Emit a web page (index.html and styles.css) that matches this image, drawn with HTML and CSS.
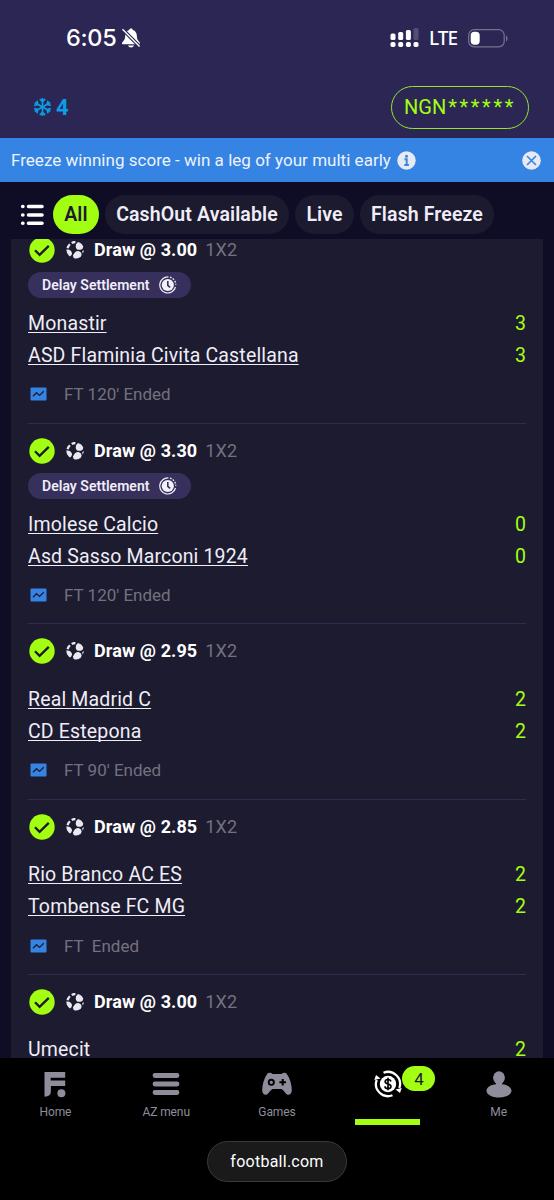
FILE: index.html
```html
<!DOCTYPE html>
<html lang="en">
<head>
<meta charset="utf-8">
<title>Open bets</title>
<link rel="stylesheet" href="styles.css">
</head>
<body>
<svg class="defs" aria-hidden="true">
  <symbol id="check" viewBox="0 0 26 26"><circle cx="13" cy="13" r="12.7" fill="#a3ff12"/><path d="M6 13.2l4.6 4.7 9.2-9" fill="none" stroke="#1d1b2f" stroke-width="2.3"/></symbol>
  <symbol id="ball" viewBox="0 0 18 18"><g fill="#e9e7f2"><path d="M10 3.200L12 .9q4.200 1 5.300 4.900-.2 2.600-2.700 2.900-3 .3-4-.8-1.500-1.600-.6-4.700z"/><path d="M9 11.200q2-1.600 4.200-1 2.600 1 2.400 3.600l-.8 2q-3 2.500-6.600 1.500-1.400-1.200-1.200-3z"/><path d="M.3 8.600q2.600-.4 4.200 1 1.700 1.600 1.500 3-.4 2.300-2.200 2.900Q.5 13 .3 8.600z"/><path d="M16.200 10.200l1.600-1.200q-.1 2-1.100 3.500z"/></g><path d="M1.600 7.200Q2.200 4.900 3.900 3.200M5.700 2Q7.400.9 9.400 1" fill="none" stroke="#e9e7f2" stroke-width="2.300"/></symbol>
  <symbol id="clock" viewBox="0 0 18 18"><circle cx="8.800" cy="9" r="6.100" fill="#f2f0fa"/><path d="M9.500 1A8 8 0 1 0 16.500 11" fill="none" stroke="#f2f0fa" stroke-width="1.200"/><path d="M11 1.200a8 8 0 0 1 5.800 7.500" fill="none" stroke="#f2f0fa" stroke-width="1.300" stroke-dasharray="1.700 1.300"/><path d="M8.800 5v4.300l2.300 2" fill="none" stroke="#37305c" stroke-width="1.600"/></symbol>
  <symbol id="chart" viewBox="0 0 17 14"><rect x=".5" y=".5" width="16" height="13" rx="1" fill="#3584e4"/><path d="M3 9.300l3.500-3.600 3 2.700 4.300-4.200" fill="none" stroke="#1d1b2f" stroke-width="1.300"/></symbol>
</svg>

<header class="top">
  <div class="status">
    <div class="time">6:05
      <svg width="20" height="20" viewBox="0 0 20 20"><path d="M10 .5c-1 0-1.600.6-1.800 1.400C5.500 2.700 4.200 5 4.200 7.600c0 3.700-1 4.800-2.800 6.600-.8.9-.5 2.100.8 2.100h15.400c1.300 0 1.700-1.200.9-2.100-1.700-1.800-2.700-2.900-2.700-6.600 0-2.600-1.300-4.900-4-5.700C11.600 1.100 11 .5 10 .5zM7 17.500h6c-.4 1.300-1.500 2-3 2s-2.600-.7-3-2z" fill="#fff"/><path d="M1.500 1.300L18.600 18.500" stroke="#2b2653" stroke-width="3.600"/><path d="M1.500 1.300L18.600 18.500" stroke="#fff" stroke-width="1.400"/></svg>
    </div>
    <div class="signals">
      <svg width="29" height="20" viewBox="0 0 29 20"><g fill="#fff"><rect x=".5" y="5.500" width="5" height="6.500" rx="1.600"/><rect x="8.200" y="4" width="5" height="8" rx="1.600"/><rect x="15.900" y="2" width="5" height="10" rx="1.600"/><rect x=".5" y="14" width="5" height="5" rx="1.800"/><rect x="8.200" y="14" width="5" height="5" rx="1.800"/><rect x="15.900" y="14" width="5" height="5" rx="1.800"/><rect x="23.500" y="14" width="5" height="5" rx="1.800"/></g><rect x="23.500" y="0" width="5" height="12" rx="1.600" fill="#534e75"/></svg>
      <span class="lte">LTE</span>
      <svg width="40" height="19" viewBox="0 0 40 19"><rect x=".7" y=".7" width="35.500" height="17.200" rx="5.500" fill="none" stroke="#77738f" stroke-width="1.200"/><rect x="2.700" y="2.700" width="9" height="13" rx="3.700" fill="#fff"/><path d="M38 6.500q1.500.7 1.500 3t-1.500 3z" fill="#77738f"/></svg>
    </div>
  </div>
  <div class="account">
    <div class="freezes">
      <svg width="17" height="18" viewBox="-8.500 -9 17 18" fill="none" stroke="#0d9de8" stroke-width="1.700"><g id="arm"><path d="M0 0V-9M-2.700-8L0-5.300 2.700-8"/></g><use href="#arm" transform="rotate(60)"/><use href="#arm" transform="rotate(120)"/><use href="#arm" transform="rotate(180)"/><use href="#arm" transform="rotate(240)"/><use href="#arm" transform="rotate(300)"/></svg>
      <span>4</span>
    </div>
    <div class="balance"><span>NGN</span><span class="stars">******</span></div>
  </div>
</header>

<div class="banner">
  <span>Freeze winning score - win a leg of your multi early</span>
  <svg width="19" height="19" viewBox="0 0 19 19"><circle cx="9.500" cy="9.500" r="9.200" fill="#e8eaf3"/><circle cx="9.500" cy="5.200" r="1.500" fill="#3584e4"/><path d="M7.500 8.300h2.200v5.500M7.300 14h4.600" fill="none" stroke="#3584e4" stroke-width="1.900"/></svg>
  <svg class="close" width="19" height="19" viewBox="0 0 19 19"><circle cx="9.500" cy="9.500" r="9.300" fill="#e8eaf3"/><path d="M5 5l9 9M14 5l-9 9" stroke="#3584e4" stroke-width="1.600"/></svg>
</div>

<div class="filters">
  <svg width="24" height="22" viewBox="0 0 24 22" stroke="#fff" stroke-width="3.600" stroke-linecap="round"><path d="M2.700 2.500h.2M2.700 11h.2M2.700 19.300h.2M8.500 2.500h13.500M8.500 11h13.500M8.500 19.300h13.500"/></svg>
  <span class="chip all">All</span>
  <span class="chip cashout">CashOut Available</span>
  <span class="chip live">Live</span>
  <span class="chip flash">Flash Freeze</span>
</div>

<main class="list">
  <section class="bet">
    <div class="pick"><svg class="i-check"><use href="#check"/></svg><svg class="i-ball"><use href="#ball"/></svg><b>Draw @ 3.00</b><span>1X2</span></div>
    <div class="delay"><span>Delay Settlement</span><svg><use href="#clock"/></svg></div>
    <div class="team"><u>Monastir</u><span>3</span></div>
    <div class="team"><u>ASD Flaminia Civita Castellana</u><span>3</span></div>
    <div class="state"><svg><use href="#chart"/></svg><span>FT 120' Ended</span></div>
  </section>
  <section class="bet">
    <div class="pick"><svg class="i-check"><use href="#check"/></svg><svg class="i-ball"><use href="#ball"/></svg><b>Draw @ 3.30</b><span>1X2</span></div>
    <div class="delay"><span>Delay Settlement</span><svg><use href="#clock"/></svg></div>
    <div class="team"><u>Imolese Calcio</u><span>0</span></div>
    <div class="team"><u>Asd Sasso Marconi 1924</u><span>0</span></div>
    <div class="state"><svg><use href="#chart"/></svg><span>FT 120' Ended</span></div>
  </section>
  <section class="bet plain">
    <div class="pick"><svg class="i-check"><use href="#check"/></svg><svg class="i-ball"><use href="#ball"/></svg><b>Draw @ 2.95</b><span>1X2</span></div>
    <div class="team"><u>Real Madrid C</u><span>2</span></div>
    <div class="team"><u>CD Estepona</u><span>2</span></div>
    <div class="state"><svg><use href="#chart"/></svg><span>FT 90' Ended</span></div>
  </section>
  <section class="bet plain">
    <div class="pick"><svg class="i-check"><use href="#check"/></svg><svg class="i-ball"><use href="#ball"/></svg><b>Draw @ 2.85</b><span>1X2</span></div>
    <div class="team"><u>Rio Branco AC ES</u><span>2</span></div>
    <div class="team"><u>Tombense FC MG</u><span>2</span></div>
    <div class="state"><svg><use href="#chart"/></svg><span>FT &nbsp;Ended</span></div>
  </section>
  <section class="bet plain last">
    <div class="pick"><svg class="i-check"><use href="#check"/></svg><svg class="i-ball"><use href="#ball"/></svg><b>Draw @ 3.00</b><span>1X2</span></div>
    <div class="team"><u>Umecit</u><span>2</span></div>
  </section>
</main>

<nav class="tabs">
  <div class="tab"><svg width="28" height="28" viewBox="0 0 28 28" fill="#8f8d9c"><path d="M3.500 2h20.700v5.800H9.700v2.700h14.500v5.500H9.900v5.500q0 5-6.400 5.300z"/><circle cx="20.400" cy="23.300" r="4"/></svg><span>Home</span></div>
  <div class="tab"><svg width="28" height="28" viewBox="0 0 28 28" stroke="#8f8d9c" stroke-width="4.800" stroke-linecap="round"><path d="M3 5.500h22M3 14h22M3 22.500h22"/></svg><span>AZ menu</span></div>
  <div class="tab"><svg width="32" height="28" viewBox="0 0 32 28"><path d="M6.500 3.500c1.600-1.100 3.500-1.100 5 .6h9c1.600-1.700 3.500-1.700 5-.6 3.500 4.500 5.200 11 5.300 16.500.1 3-1.900 5-4 4.700-2.300-.4-4-5-6.500-5.800h-8.600c-2.500.8-4.200 5.400-6.500 5.800-2.100.3-4.100-1.700-4-4.700.1-5.500 1.800-12 5.300-16.500z" fill="#8f8d9c"/><circle cx="10.300" cy="12.300" r="2.600" fill="none" stroke="#000" stroke-width="1.900"/><path d="M21.700 9v6.600M18.400 12.300H25" stroke="#000" stroke-width="2.100"/></svg><span>Games</span></div>
  <div class="tab active">
    <svg width="28" height="28" viewBox="0 0 28 28" fill="none"><circle cx="14" cy="14" r="8.200" fill="#fff"/><path d="M9.500 2.800A12 12 0 0 1 25.300 18M18.500 25.200A12 12 0 0 1 2.700 10" stroke="#fff" stroke-width="2.300"/><path d="M21.500 19.500l6.200-1.500-1.700 5zM6.500 8.500L.3 10 2 5z" fill="#fff"/><path d="M16.900 11.500q-.5-2-2.900-2-2.800 0-2.800 2.200c0 2.900 5.700 1.600 5.700 4.500 0 1.500-1.200 2.400-2.900 2.400-2.200 0-3-1.200-3-2.400M14 7.800v12.500" stroke="#000" stroke-width="1.700"/></svg>
    <span class="count">4</span>
    <i class="marker"></i>
  </div>
  <div class="tab"><svg width="28" height="28" viewBox="0 0 28 28" fill="#8f8d9c"><ellipse cx="14" cy="7.700" rx="5.900" ry="6.400"/><path d="M10.500 11h7l-.5 3.200c5.300.4 9.500 3.200 9.500 6.500 0 3.800-5.600 6.800-12.500 6.800S1.500 24.500 1.500 20.700c0-3.300 4.200-6.100 9.500-6.500z"/></svg><span>Me</span></div>
</nav>

<footer class="browser"><span class="site">football.com</span></footer>
</body>
</html>
```

FILE: styles.css
```css
* { box-sizing: border-box; }
body {
  margin: 0;
  width: 554px;
  height: 1200px;
  display: flex;
  flex-direction: column;
  overflow: hidden;
  background: #0f0c25;
  color: #efedf7;
  font-family: Roboto, "Liberation Sans", sans-serif;
}
svg { display: block; flex: none; }
.defs { display: none; }

.top { flex: none; height: 138px; background: #2b2653; }
.status { height: 76px; display: flex; justify-content: space-between; align-items: center; padding: 0 46px 0 66px; color: #fff; }
.time { display: flex; align-items: center; gap: 5px; font: 500 23.500px/28px Inter, sans-serif; letter-spacing: -.3px; }
.signals { display: flex; align-items: center; }
.lte { margin: 0 11px 0 10px; font: 500 19px/22px "Noto Sans", sans-serif; letter-spacing: -1px; }
.account { height: 62px; display: flex; justify-content: space-between; align-items: center; padding: 0 25px 0 34px; }
.freezes { display: flex; align-items: center; gap: 5px; color: #0d9de8; font-size: 22px; font-weight: 700; }
.balance { display: flex; align-items: center; width: 138px; height: 43px; padding: 0 0 1px 12px; border: 1.500px solid #98e52b; border-radius: 22px; color: #a3ff12; font-size: 20px; }
.stars { letter-spacing: 2.700px; margin-left: 2px; }

.banner { flex: none; height: 44px; display: flex; align-items: center; gap: 6px; padding: 0 13px 0 11px; background: #3584e4; font-size: 17px; letter-spacing: .025px; color: #eef2fc; }
.close { margin-left: auto; }

.filters { flex: none; height: 57px; display: flex; padding: 13px 0 5px 20px; }
.filters > svg { margin: 9px 9px 0 0; }
.chip { height: 39px; line-height: 39px; margin-right: 6px; border-radius: 20px; text-align: center; background: #1c1a2e; font-size: 19.500px; font-weight: 600; letter-spacing: .12px; }
.all { width: 46px; background: #a3ff12; color: #1c1a2e; }
.cashout { width: 184px; }
.live { width: 59px; }
.flash { width: 134px; }

.list { flex: none; height: 819px; margin: 0 11px; padding: 0 17px; background: #1d1b2f; overflow: hidden; }
.bet { height: 200.500px; padding-top: 13.500px; border-bottom: 1px solid #302c50; }
.bet:first-child { height: 201px; margin-top: -16px; padding-top: 13px; }
.bet:first-child + .bet { height: 200px; padding-top: 13px; }
.plain { height: 175.500px; }
.last { height: 98px; border-bottom: 0; }
.pick { display: flex; align-items: center; height: 27px; font-size: 18px; }
.i-check { width: 26px; height: 26px; margin-left: 1px; }
.i-ball { width: 18px; height: 18px; margin-left: 11px; }
.pick b { margin: -1px 0 0 10px; color: #fff; font-weight: 700; letter-spacing: .1px; }
.pick span { margin: -1px 0 0 8px; color: #74717f; letter-spacing: .15px; }
.plain .pick { margin-bottom: 18px; }
.delay { display: flex; align-items: center; width: 163px; height: 26px; margin: 8.500px 0 9px; padding-left: 14px; border-radius: 13px; background: #37305c; font-size: 14px; font-weight: 600; letter-spacing: .03px; }
.delay svg { width: 18px; height: 18px; margin-left: 9px; }
.team { height: 32px; line-height: 34px; display: flex; justify-content: space-between; font-size: 19.500px; letter-spacing: .16px; }
.team u { text-decoration-thickness: 1.400px; text-underline-offset: 2px; text-decoration-skip-ink: none; }
.team span { color: #a3ff12; }
.last .team { line-height: 32px; }
.state { display: flex; align-items: center; height: 24px; margin-top: 11.500px; font-size: 17px; color: #74717f; }
.state svg { width: 17px; height: 14px; margin: 0 17px 0 2px; }

.tabs { flex: none; height: 69px; display: grid; grid-template-columns: repeat(5, 1fr); background: #000; }
.tab { position: relative; display: flex; flex-direction: column; align-items: center; padding-top: 12px; color: #8f8d9c; font-size: 12px; letter-spacing: -.1px; }
.tab span { margin-top: 6px; line-height: 16px; }
.tab .count { position: absolute; left: 70px; top: 8px; width: 33px; height: 25px; margin: 0; border-radius: 13px; background: #a3ff12; color: #1c1a2e; font-size: 17px; line-height: 26px; text-align: center; }
.marker { width: 65px; height: 6px; margin-top: 21px; background: #a3ff12; }

.browser { flex: 1; display: flex; justify-content: center; padding-top: 14px; background: #000; }
.site { width: 140px; height: 41px; border: 1px solid #3a3a3c; border-radius: 21px; background: #1a1a1a; color: #fff; font-size: 16px; line-height: 39px; letter-spacing: .25px; text-align: center; }
```
